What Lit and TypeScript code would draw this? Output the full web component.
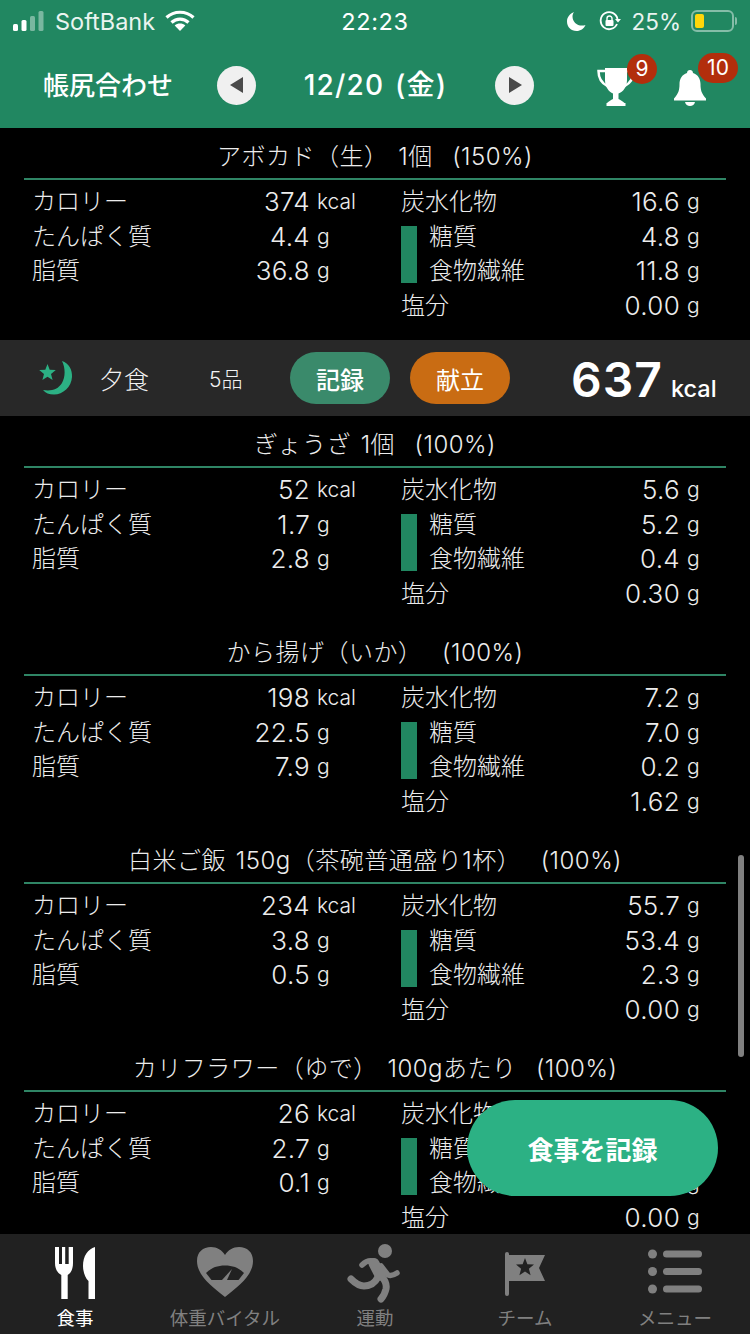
import { LitElement, html, css, svg } from "lit";
import { customElement } from "lit/decorators.js";

interface Food {
  title: string;
  kcal: string; protein: string; fat: string;
  carb: string; sugar: string; fiber: string; salt: string;
}

const first: Food = { title: "アボカド（生） 1個  (150%)", kcal: "374", protein: "4.4", fat: "36.8", carb: "16.6", sugar: "4.8", fiber: "11.8", salt: "0.00" };
const dinner: Food[] = [
  { title: "ぎょうざ 1個  (100%)", kcal: "52", protein: "1.7", fat: "2.8", carb: "5.6", sugar: "5.2", fiber: "0.4", salt: "0.30" },
  { title: "から揚げ（いか）  (100%)", kcal: "198", protein: "22.5", fat: "7.9", carb: "7.2", sugar: "7.0", fiber: "0.2", salt: "1.62" },
  { title: "白米ご飯 150g（茶碗普通盛り1杯）  (100%)", kcal: "234", protein: "3.8", fat: "0.5", carb: "55.7", sugar: "53.4", fiber: "2.3", salt: "0.00" },
  { title: "カリフラワー（ゆで） 100gあたり  (100%)", kcal: "26", protein: "2.7", fat: "0.1", carb: "16.6", sugar: "0.0", fiber: "0.0", salt: "0.00" },
];

const tabIcons = {
  meal: svg`<svg width="40" height="60" viewBox="0 0 40 60" fill="currentColor"><g transform="translate(0 4)">
    <path d="M0 0h4v17h3V0h3.2v17h3.5V0H18v16c0 6-2 10-5.3 12v24H6.3V28C2.5 26 0 22 0 16z"/>
    <path d="M40 0v52h-6.500V34C30 31 28 24 28 19 28 9 33 2 40 0z"/></g></svg>`,
  heart: svg`<svg width="56" height="60" viewBox="0 0 56 60"><g transform="translate(0 4)">
    <path fill="currentColor" d="M28 50C14 39 0 28 0 14 0 5 6 0 14 0c6 0 11 3 14 8 3-5 8-8 14-8 8 0 14 5 14 14 0 14-14 25-28 36z"/>
    <path fill="#212121" d="M9 26c5-5 11-7.500 19-7.500S42 21 47 26l-5.500 7h-27z"/>
    <path fill="currentColor" d="M25 33l10-11-5 11z"/></g></svg>`,
  run: svg`<svg width="56" height="60" viewBox="0 0 56 60" fill="none" stroke="currentColor" stroke-linecap="round" stroke-linejoin="round"><g transform="translate(1 2)">
    <circle cx="37" cy="6" r="7" fill="currentColor" stroke="none"/>
    <path stroke-width="11" d="M26 18.500L32 30"/>
    <path stroke-width="5.500" d="M14 20c3-3 6-5 11-4"/>
    <path stroke-width="5.500" d="M33 21l7 9c3 1 6 0 9-2"/>
    <path stroke-width="7" d="M30 32c-3 6-8 9-14 9-5 0-9-3-13-7"/>
    <path stroke-width="7" d="M33 31c4 4 6 8 5 13-1 4-2 7-5 10"/></g></svg>`,
  flag: svg`<svg width="40" height="60" viewBox="0 0 40 60"><g transform="translate(0 9)">
    <rect x="0" y="0" width="4" height="44" rx="2" fill="currentColor"/>
    <path fill="currentColor" d="M4 3h36l-6 13 6 13H4z"/>
    <path fill="#212121" d="M20 6l2.400 6.200 6.600.4-5.100 4.200 1.700 6.400L20 19.600l-5.600 3.600 1.700-6.400-5.100-4.200 6.600-.4z"/></g></svg>`,
  menu: svg`<svg width="54" height="60" viewBox="0 0 54 60" fill="currentColor"><g transform="translate(0 6.500)">
    <circle cx="4.500" cy="4.500" r="4.500"/><circle cx="4.500" cy="22" r="4.500"/><circle cx="4.500" cy="39.500" r="4.500"/>
    <rect x="15" y="1" width="39" height="7" rx="3.500"/><rect x="15" y="18.500" width="39" height="7" rx="3.500"/><rect x="15" y="36" width="39" height="7" rx="3.500"/></g></svg>`,
};

const tabs = [
  { label: "食事", icon: tabIcons.meal, active: true },
  { label: "体重バイタル", icon: tabIcons.heart, active: false },
  { label: "運動", icon: tabIcons.run, active: false },
  { label: "チーム", icon: tabIcons.flag, active: false },
  { label: "メニュー", icon: tabIcons.menu, active: false },
];

@customElement("app-root")
export class AppRoot extends LitElement {
  static styles = css`
    :host {
      display: block; width: 750px; height: 1334px; position: relative; overflow: hidden;
      background: #000; color: #ececec;
      font-family: "Inter", "Noto Sans CJK JP", sans-serif; font-weight: 300;
    }
    .page { display: flex; flex-direction: column; height: 100%; }

    .top { background: #218761; color: #fff; height: 128px; flex: none; }
    .status { height: 40px; display: grid; grid-template-columns: 1fr auto 1fr; align-items: center; padding: 2px 13px 0; box-sizing: border-box; font-size: 23.5px; font-weight: 400; }
    .st-left, .st-right { display: flex; align-items: center; }
    .st-right { justify-content: flex-end; }
    .carrier { margin: 0 10px 0 9px; color: #eaf4f0; }
    .time { letter-spacing: .6px; }
    .pct { margin: 0 10px; color: #eaf4f0; font-size: 22.5px; }
    .lockic { margin-left: 13px; }
    .battery { width: 43px; height: 22px; box-sizing: border-box; border: 2px solid rgba(255,255,255,.45); border-radius: 6px; padding: 2px; display: flex; }
    .battery i { display: block; width: 9px; background: #ffd60a; border-radius: 2px; }
    .nub { width: 2px; height: 8px; background: rgba(255,255,255,.45); margin-left: 1px; border-radius: 0 2px 2px 0; }

    .nav { height: 88px; display: flex; align-items: center; padding-left: 43px; padding-top: 2px; box-sizing: border-box; }
    .nav-title { width: 174px; font-size: 26px; font-weight: 500; padding-bottom: 4px; }
    .round { width: 39px; height: 39px; border-radius: 50%; background: #f0f0f0; display: flex; align-items: center; justify-content: center; flex: none; }
    .date { width: 239px; text-align: center; font-size: 28px; font-weight: 500; letter-spacing: 1.2px; word-spacing: 2px; padding-bottom: 5px; white-space: nowrap; }
    .trophy { position: relative; margin-left: 63px; margin-top: 3px; width: 38px; height: 38px; display: block; }
    .bell { position: relative; margin-left: 39px; margin-top: 5px; width: 32px; height: 36px; display: block; }
    .badge { position: absolute; height: 30px; min-width: 30px; padding: 0 5px; box-sizing: border-box; border-radius: 15px; background: #b22e0c; color: #fff; font-size: 21px; font-weight: 400; line-height: 29px; text-align: center; }
    .trophy .badge { left: 30px; top: -14px; }
    .bell .badge { left: 24px; top: -17px; width: 40px; }

    .list { flex: 1; overflow: hidden; min-height: 0; }
    .block { height: 208px; padding: 0 24px; box-sizing: border-box; }
    .title { height: 50px; padding-top: 7px; box-sizing: border-box; line-height: 44px; text-align: center; font-size: 24px; white-space: pre; letter-spacing: .5px; word-spacing: 2.5px; }
    .grid { border-top: 2px solid #2f8565; padding: 5.4px 9px 0 8px; display: grid; grid-template-columns: 369px 316px; }
    .row { height: 34.5px; line-height: 34.5px; display: flex; font-size: 24px; }
    .lab { flex: 1; }
    .num { font-size: 26px; letter-spacing: .3px; text-align: right; }
    .unit { font-size: 21px; margin-left: 7px; width: 30px; }
    .col-l .unit { width: 84px; }
    .group { display: flex; gap: 12px; }
    .bar { width: 16px; height: 57px; background: #218761; align-self: center; flex: none; }
    .subs { flex: 1; }

    .meal { margin-top: 4px; height: 76px; background: #282828; display: flex; align-items: center; padding-left: 39px; box-sizing: border-box; color: #f2f2f2; }
    .meal-name { margin-left: 26px; width: 110px; font-size: 25px; }
    .meal-count { width: 81px; font-size: 21px; }
    .pill { width: 100px; height: 52px; border-radius: 26px; display: flex; align-items: center; justify-content: center; font-size: 24px; font-weight: 500; color: #fff; }
    .pill.rec { background: #3a8a6b; }
    .pill.plan { background: #c96c13; margin-left: 20px; font-weight: 400; }
    .total { margin-left: 61px; display: flex; align-items: baseline; color: #fff; padding-top: 2px; }
    .total b { font-size: 48px; font-weight: 600; letter-spacing: 1px; }
    .total span { font-size: 23.5px; font-weight: 500; margin-left: 8px; }

    .tabs { height: 100px; flex: none; background: #212121; display: grid; grid-template-columns: repeat(5, 150px); box-sizing: border-box; padding-top: 9px; }
    .tab { display: flex; flex-direction: column; align-items: center; color: #808080; font-size: 18.5px; font-weight: 400; }
    .tab.on { color: #fff; }
    .tab svg { display: block; }
    .tab span { line-height: 30px; white-space: nowrap; }

    .fab { position: absolute; left: 467px; top: 1100px; width: 251px; height: 96px; border-radius: 48px; background: #2cb184; color: #fff; display: flex; align-items: center; justify-content: center; font-size: 26px; font-weight: 700; }
    .scroll { position: absolute; left: 738px; top: 855px; width: 6px; height: 202px; border-radius: 3px; background: #808080; }
  `;

  private block(f: Food) {
    const r = (l: string, v: string, u = "g") => html`<div class="row"><span class="lab">${l}</span><span class="num">${v}</span><span class="unit">${u}</span></div>`;
    return html`<section class="block">
      <div class="title">${f.title}</div>
      <div class="grid">
        <div class="col-l">
          ${r("カロリー", f.kcal, "kcal")}
          ${r("たんぱく質", f.protein)}
          ${r("脂質", f.fat)}
        </div>
        <div class="col-r">
          ${r("炭水化物", f.carb)}
          <div class="group">
            <div class="bar"></div>
            <div class="subs">${r("糖質", f.sugar)}${r("食物繊維", f.fiber)}</div>
          </div>
          ${r("塩分", f.salt)}
        </div>
      </div>
    </section>`;
  }

  render() {
    return html`<div class="page">
      <header class="top">
        <div class="status">
          <div class="st-left">
            <svg width="33" height="22" viewBox="0 0 33 22"><rect x="0" y="14" width="5" height="7" rx="1.500" fill="#fff"/><rect x="8.500" y="10" width="5" height="11" rx="1.500" fill="#fff"/><rect x="17" y="6" width="5" height="15" rx="1.500" fill="#fff" opacity=".4"/><rect x="25.500" y="1" width="5" height="20" rx="1.500" fill="#fff" opacity=".4"/></svg>
            <span class="carrier">SoftBank</span>
            <svg width="30" height="22" viewBox="0 0 30 22" fill="none" stroke="#fff" stroke-width="3.200"><path d="M1.500 7.500C9 .5 21 .5 28.500 7.500"/><path d="M6.500 12.500c4.800-4.500 12.200-4.500 17 0"/><path fill="#fff" stroke="none" d="M15 21l-5.300-5.500c3-2.600 7.600-2.600 10.600 0z"/></svg>
          </div>
          <div class="time">22:23</div>
          <div class="st-right">
            <svg width="19" height="20" viewBox="0 0 19 20"><path fill="#fff" d="M7 1C3 2.500 0 6 0 10.500 0 16 4 20 9.500 20c4 0 7.500-2.300 9-6-1 .4-2.200.6-3.400.6C9.500 14.600 5.500 10.500 5.500 5.500 5.500 4 6 2.400 7 1z"/></svg>
            <svg class="lockic" width="23" height="20" viewBox="0 0 23 20" fill="none"><path stroke="#fff" stroke-width="1.800" d="M18.500 8A8.500 8.500 0 1 0 18 13"/><path fill="#fff" d="M16 8h6l-3 3.500z"/><rect x="6.500" y="9" width="8" height="6" rx="1" fill="#fff"/><path stroke="#fff" stroke-width="1.400" d="M8 9V7.500a2.500 2.500 0 0 1 5 0V9"/></svg>
            <span class="pct">25%</span>
            <div class="battery"><i></i></div><div class="nub"></div>
          </div>
        </div>
        <div class="nav">
          <div class="nav-title">帳尻合わせ</div>
          <div class="round"><svg width="16" height="18" viewBox="0 0 16 18"><path fill="#4a4a4a" d="M14 1v16L1 9z"/></svg></div>
          <div class="date">12/20 (金)</div>
          <div class="round"><svg width="16" height="18" viewBox="0 0 16 18"><path fill="#4a4a4a" d="M2 1v16l13-8z"/></svg></div>
          <div class="trophy">
            <svg width="38" height="38" viewBox="0 0 38 38" fill="none"><path fill="#fff" d="M8 0h22v12c0 7-4 12-8.500 13.500V31c2 1 4 2 6 4H10c2-2 4-3 6-4v-5.500C12 24 8 19 8 12z"/><path fill="#fff" d="M9.500 35h19v3h-19z"/><path stroke="#fff" stroke-width="2.500" d="M8 3H1.500c0 7 2.500 12 9 15M30 3h6.500c0 7-2.500 12-9 15"/></svg>
            <div class="badge">9</div>
          </div>
          <div class="bell">
            <svg width="32" height="36" viewBox="0 0 32 36"><path fill="#fff" d="M16 0c1.700 0 3 1.300 3 3 5 1.500 7.500 6 7.500 11 0 6 1 9.500 5.500 14.500v2H0v-2C4.500 23.500 5.500 20 5.500 14 5.500 9 8 4.500 13 3c0-1.700 1.300-3 3-3z"/><path fill="#fff" d="M11 32h10c-.5 2.500-2.500 4-5 4s-4.500-1.500-5-4z"/></svg>
            <div class="badge">10</div>
          </div>
        </div>
      </header>

      <main class="list">
        ${this.block(first)}
        <div class="meal">
          <svg width="34" height="34" viewBox="0 0 34 34"><path fill="#2cb184" d="M23 0c7 2.500 10.500 9 10 16C32.500 26 24 33.500 15 33.500c-5 0-8.500-1.500-11-4.500 8 1.500 15-.5 19-7 3.500-6 3.500-15 0-22z"/><path fill="#2cb184" d="M8.500 3l2.200 5.800 6.100.3-4.800 3.900 1.600 6-5.100-3.300-5.100 3.300 1.600-6L.2 9.100l6.100-.3z"/></svg>
          <div class="meal-name">夕食</div>
          <div class="meal-count">5品</div>
          <div class="pill rec">記録</div>
          <div class="pill plan">献立</div>
          <div class="total"><b>637</b><span>kcal</span></div>
        </div>
        ${dinner.map((f) => this.block(f))}
      </main>

      <nav class="tabs">
        ${tabs.map((t) => html`<div class="tab ${t.active ? "on" : ""}">${t.icon}<span>${t.label}</span></div>`)}
      </nav>
    </div>
    <div class="scroll"></div>
    <div class="fab">食事を記録</div>`;
  }
}
